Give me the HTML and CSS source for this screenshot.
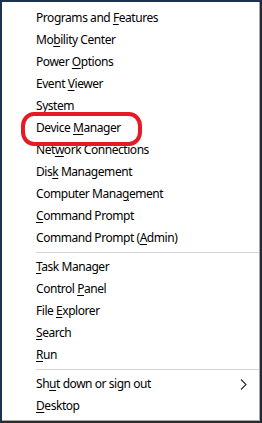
FILE: index.html
```html
<!DOCTYPE html>
<html>
<head>
<meta charset="utf-8">
<link rel="stylesheet" href="styles.css">
</head>
<body>
<div class="frame">
  <div class="menu">
    <div class="group">
      <div class="item">Programs and <u>F</u>eatures</div>
      <div class="item">Mo<u>b</u>ility Center</div>
      <div class="item">Power <u>O</u>ptions</div>
      <div class="item">Event <u>V</u>iewer</div>
      <div class="item">S<u>y</u>stem</div>
      <div class="item item-marked">Device <u>M</u>anager<span class="highlight"></span></div>
      <div class="item">Net<u>w</u>ork Connections</div>
      <div class="item">Dis<u>k</u> Management</div>
      <div class="item">Computer Mana<u>g</u>ement</div>
      <div class="item"><u>C</u>ommand Prompt</div>
      <div class="item">Command Prompt (<u>A</u>dmin)</div>
    </div>
    <div class="sep"></div>
    <div class="group">
      <div class="item"><u>T</u>ask Manager</div>
      <div class="item">Control <u>P</u>anel</div>
      <div class="item">File <u>E</u>xplorer</div>
      <div class="item"><u>S</u>earch</div>
      <div class="item"><u>R</u>un</div>
    </div>
    <div class="sep"></div>
    <div class="group">
      <div class="item item-sub"><span class="label">Sh<u>u</u>t down or sign out</span><svg class="chev" width="8" height="11" viewBox="0 0 8 11"><polyline points="1,0.5 6,5.5 1,10.5" fill="none" stroke="#2a2a2a" stroke-width="1.1"/></svg></div>
      <div class="item"><u>D</u>esktop</div>
    </div>
  </div>
</div>
</body>
</html>
```
FILE: styles.css
```css
* { box-sizing: border-box; }
html, body { margin: 0; padding: 0; background: #fff; }
body { width: 262px; height: 423px; }

.frame {
  width: 262px;
  height: 423px;
  border: 2px solid #1d3250;
  border-bottom-color: #2c2c2c;
  border-right-color: #1f2a38;
  background: #fff;
}

.menu {
  height: 100%;
  padding: 5px 0 3px 0;
  border-right: 1px solid #a8a8a8;
  border-bottom: 1px solid #a8a8a8;
  display: flex;
  flex-direction: column;
}

.group { display: flex; flex-direction: column; }

.item {
  height: 22px;
  line-height: 22px;
  padding-left: 34px;
  font-family: "Noto Sans", "Open Sans", sans-serif;
  font-size: 12px;
  letter-spacing: -0.45px;
  color: #000;
  white-space: nowrap;
}

.item u {
  text-decoration: underline;
  text-decoration-thickness: 1px;
  text-underline-offset: 2px;
}

.item-marked { position: relative; }

.highlight {
  position: absolute;
  left: 19px;
  top: -5px;
  width: 121px;
  height: 34px;
  border: 4px solid #e61a24;
  border-radius: 13px / 14px;
}

.item-sub {
  display: flex;
  align-items: center;
  justify-content: space-between;
  padding-right: 11px;
}

.chev { display: block; }

.sep {
  height: 1px;
  background: #d4d4d4;
  margin: 3px 0 3px 34px;
}
```
